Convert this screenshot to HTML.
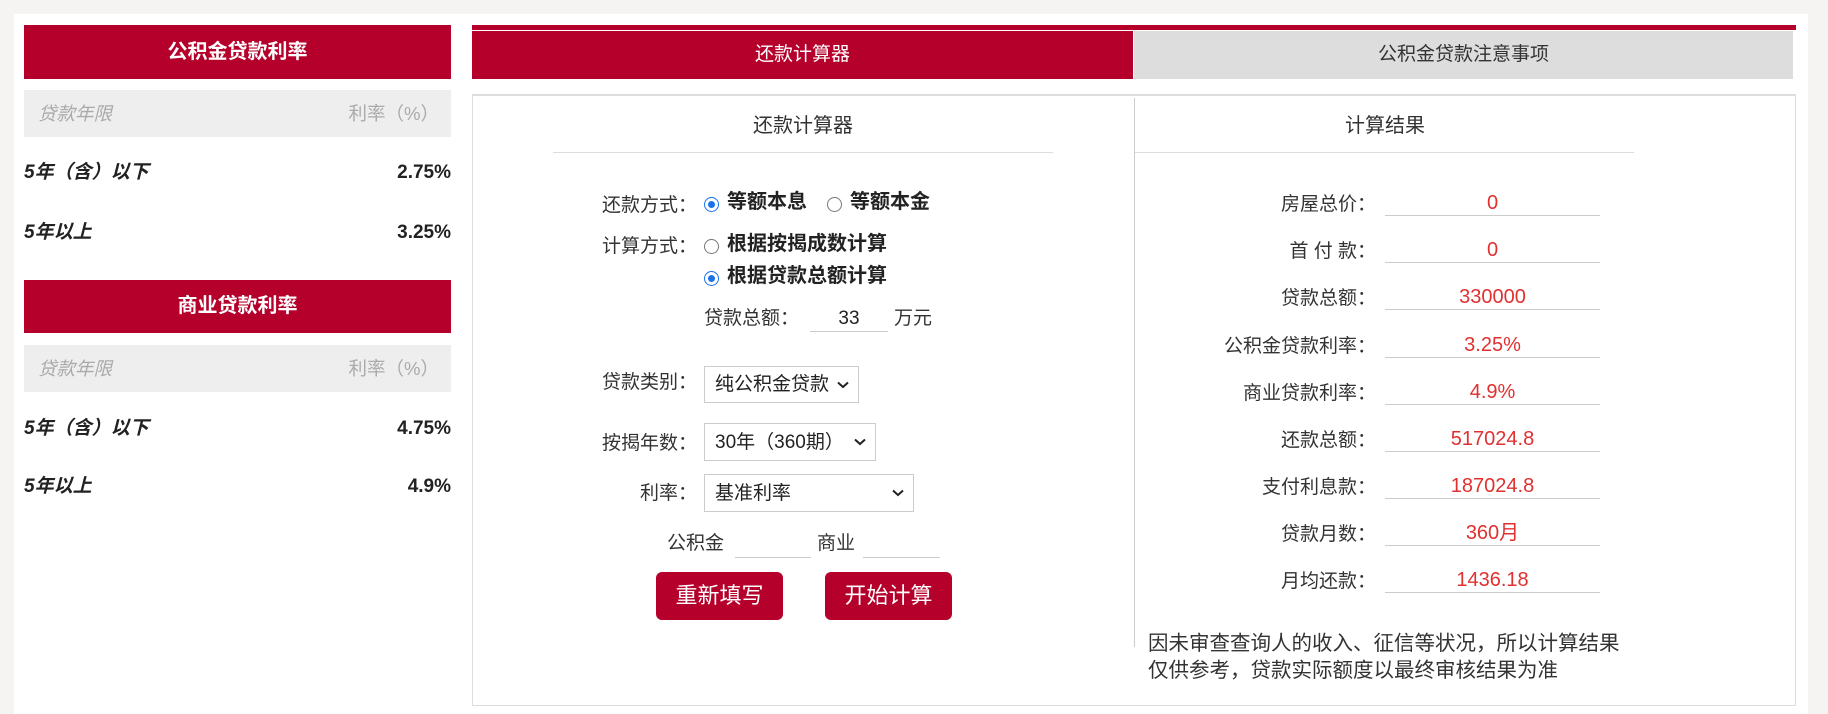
<!DOCTYPE html>
<html><head><meta charset="utf-8"><style>
*{margin:0;padding:0;box-sizing:border-box}
body{width:1828px;height:714px;background:#f5f4f2;font-family:"Liberation Sans","Noto Sans CJK SC",sans-serif;color:#333;position:relative;overflow:hidden}
.a{position:absolute;white-space:nowrap;line-height:24px}
.wrap{position:absolute;left:14px;top:14px;width:1794px;height:700px;background:#fff}
.red{background:#b5002b}
.hd{color:#fff;font-weight:bold;font-size:20px;text-align:center}
.gr{background:#eee;color:#aaa;font-style:italic;font-size:18.5px}
.rw{font-weight:bold;font-style:italic;font-size:19px;color:#222}
.lb{font-size:19px;color:#333;text-align:right}
.rad{position:absolute;width:15px;height:15px;border-radius:50%;border:1.5px solid #777;background:#fff}
.rad.on{border:1.5px solid #1a73e8;}
.rad.on::after{content:"";position:absolute;left:2.5px;top:2.5px;width:7px;height:7px;border-radius:50%;background:#1a73e8}
.rt{font-size:20px;font-weight:bold;color:#222}
.sel{position:absolute;border:1px solid #ccc;background:#fff;font-size:19px;padding-left:10px;color:#222}
.sel svg{position:absolute;right:9px;top:14px}
.ln{position:absolute;height:1px;background:#ccc}
.val{position:absolute;left:1385px;width:215px;text-align:center;color:#e03030;font-size:20px;border-bottom:1px solid #ccc;height:28px;line-height:30px}
.btn{position:absolute;top:572px;height:48px;width:127px;border-radius:6px;color:#fff;font-size:22px;text-align:center;line-height:48px}
</style></head><body>
<div class="wrap"></div>
<!-- left -->
<div class="a red hd" style="left:24px;top:25px;width:427px;height:54px;line-height:54px">公积金贷款利率</div>
<div class="a gr" style="left:24px;top:90px;width:427px;height:47px;line-height:47px"><span style="position:absolute;left:14px">贷款年限</span><span style="position:absolute;right:12px;font-style:normal">利率（%）</span></div>
<div class="a rw" style="left:24px;top:161px;width:427px"><span>5年（含）以下</span><span style="position:absolute;right:0;font-style:normal">2.75%</span></div>
<div class="a rw" style="left:24px;top:221px;width:427px"><span>5年以上</span><span style="position:absolute;right:0;font-style:normal">3.25%</span></div>
<div class="a red hd" style="left:24px;top:280px;width:427px;height:53px;line-height:53px">商业贷款利率</div>
<div class="a gr" style="left:24px;top:345px;width:427px;height:47px;line-height:47px"><span style="position:absolute;left:14px">贷款年限</span><span style="position:absolute;right:12px;font-style:normal">利率（%）</span></div>
<div class="a rw" style="left:24px;top:417px;width:427px"><span>5年（含）以下</span><span style="position:absolute;right:0;font-style:normal">4.75%</span></div>
<div class="a rw" style="left:24px;top:475px;width:427px"><span>5年以上</span><span style="position:absolute;right:0;font-style:normal">4.9%</span></div>
<!-- tabs -->
<div class="a red" style="left:472px;top:25px;width:1324px;height:5px"></div>
<div class="a red" style="left:472px;top:31px;width:661px;height:48px;color:#fff;font-size:19px;text-align:center;line-height:48px">还款计算器</div>
<div class="a" style="left:1134px;top:31px;width:659px;height:48px;background:#ddd;color:#333;font-size:19px;text-align:center;line-height:48px">公积金贷款注意事项</div>
<div class="a" style="left:472px;top:94px;width:1324px;height:612px;border:2px solid #ddd;border-width:2px 1px 1px 1px"></div>
<div class="a" style="left:1134px;top:98px;width:1px;height:549px;background:#ccc"></div>
<div class="a" style="left:553px;top:114px;width:500px;text-align:center;font-size:20px">还款计算器</div>
<div class="ln" style="left:553px;top:152px;width:500px;background:#ddd"></div>
<div class="a" style="left:1135px;top:114px;width:500px;text-align:center;font-size:20px">计算结果</div>
<div class="ln" style="left:1135px;top:152px;width:499px;background:#ddd"></div>
<!-- form -->
<div class="a lb" style="left:560px;top:194px;width:137px">还款方式：</div>
<div class="rad on" style="left:704px;top:197px"></div>
<div class="a rt" style="left:727px;top:190px">等额本息</div>
<div class="rad" style="left:827px;top:197px"></div>
<div class="a rt" style="left:850px;top:190px">等额本金</div>
<div class="a lb" style="left:560px;top:235px;width:137px">计算方式：</div>
<div class="rad" style="left:704px;top:239px"></div>
<div class="a rt" style="left:727px;top:232px">根据按揭成数计算</div>
<div class="rad on" style="left:704px;top:271px"></div>
<div class="a rt" style="left:727px;top:264px">根据贷款总额计算</div>
<div class="a" style="left:704px;top:307px;font-size:19px">贷款总额：</div>
<div class="a" style="left:810px;top:307px;width:78px;text-align:center;font-size:19px;color:#222">33</div>
<div class="ln" style="left:810px;top:331px;width:78px"></div>
<div class="a" style="left:894px;top:307px;font-size:19px">万元</div>
<div class="a lb" style="left:560px;top:371px;width:137px">贷款类别：</div>
<div class="sel" style="left:704px;top:366px;width:155px;height:37px;line-height:36px">纯公积金贷款<svg width="12" height="8" viewBox="0 0 12 8"><path d="M1 1.5L6 6 11 1.5" stroke="#222" stroke-width="2" fill="none"/></svg></div>
<div class="a lb" style="left:560px;top:432px;width:137px">按揭年数：</div>
<div class="sel" style="left:704px;top:423px;width:172px;height:38px;line-height:37px">30年（360期）<svg width="12" height="8" viewBox="0 0 12 8"><path d="M1 1.5L6 6 11 1.5" stroke="#222" stroke-width="2" fill="none"/></svg></div>
<div class="a lb" style="left:560px;top:482px;width:137px">利率：</div>
<div class="sel" style="left:704px;top:474px;width:210px;height:38px;line-height:37px">基准利率<svg width="12" height="8" viewBox="0 0 12 8"><path d="M1 1.5L6 6 11 1.5" stroke="#222" stroke-width="2" fill="none"/></svg></div>
<div class="a" style="left:667px;top:532px;font-size:19px">公积金</div>
<div class="ln" style="left:735px;top:557px;width:76px"></div>
<div class="a" style="left:817px;top:532px;font-size:19px">商业</div>
<div class="ln" style="left:863px;top:557px;width:77px"></div>
<div class="btn red" style="left:656px">重新填写</div>
<div class="btn red" style="left:825px">开始计算</div>
<!-- results -->
<div class="a lb" style="left:1152px;top:193px;width:224px">房屋总价：</div><div class="val" style="top:188px">0</div>
<div class="a lb" style="left:1152px;top:240px;width:224px">首 付 款：</div><div class="val" style="top:235px">0</div>
<div class="a lb" style="left:1152px;top:287px;width:224px">贷款总额：</div><div class="val" style="top:282px">330000</div>
<div class="a lb" style="left:1152px;top:335px;width:224px">公积金贷款利率：</div><div class="val" style="top:330px">3.25%</div>
<div class="a lb" style="left:1152px;top:382px;width:224px">商业贷款利率：</div><div class="val" style="top:377px">4.9%</div>
<div class="a lb" style="left:1152px;top:429px;width:224px">还款总额：</div><div class="val" style="top:424px">517024.8</div>
<div class="a lb" style="left:1152px;top:476px;width:224px">支付利息款：</div><div class="val" style="top:471px">187024.8</div>
<div class="a lb" style="left:1152px;top:523px;width:224px">贷款月数：</div><div class="val" style="top:518px">360月</div>
<div class="a lb" style="left:1152px;top:570px;width:224px">月均还款：</div><div class="val" style="top:565px">1436.18</div>
<div class="a" style="left:1148px;top:630px;font-size:20.5px;line-height:27px;color:#333">因未审查查询人的收入、征信等状况，所以计算结果<br>仅供参考，贷款实际额度以最终审核结果为准</div>
</body></html>
